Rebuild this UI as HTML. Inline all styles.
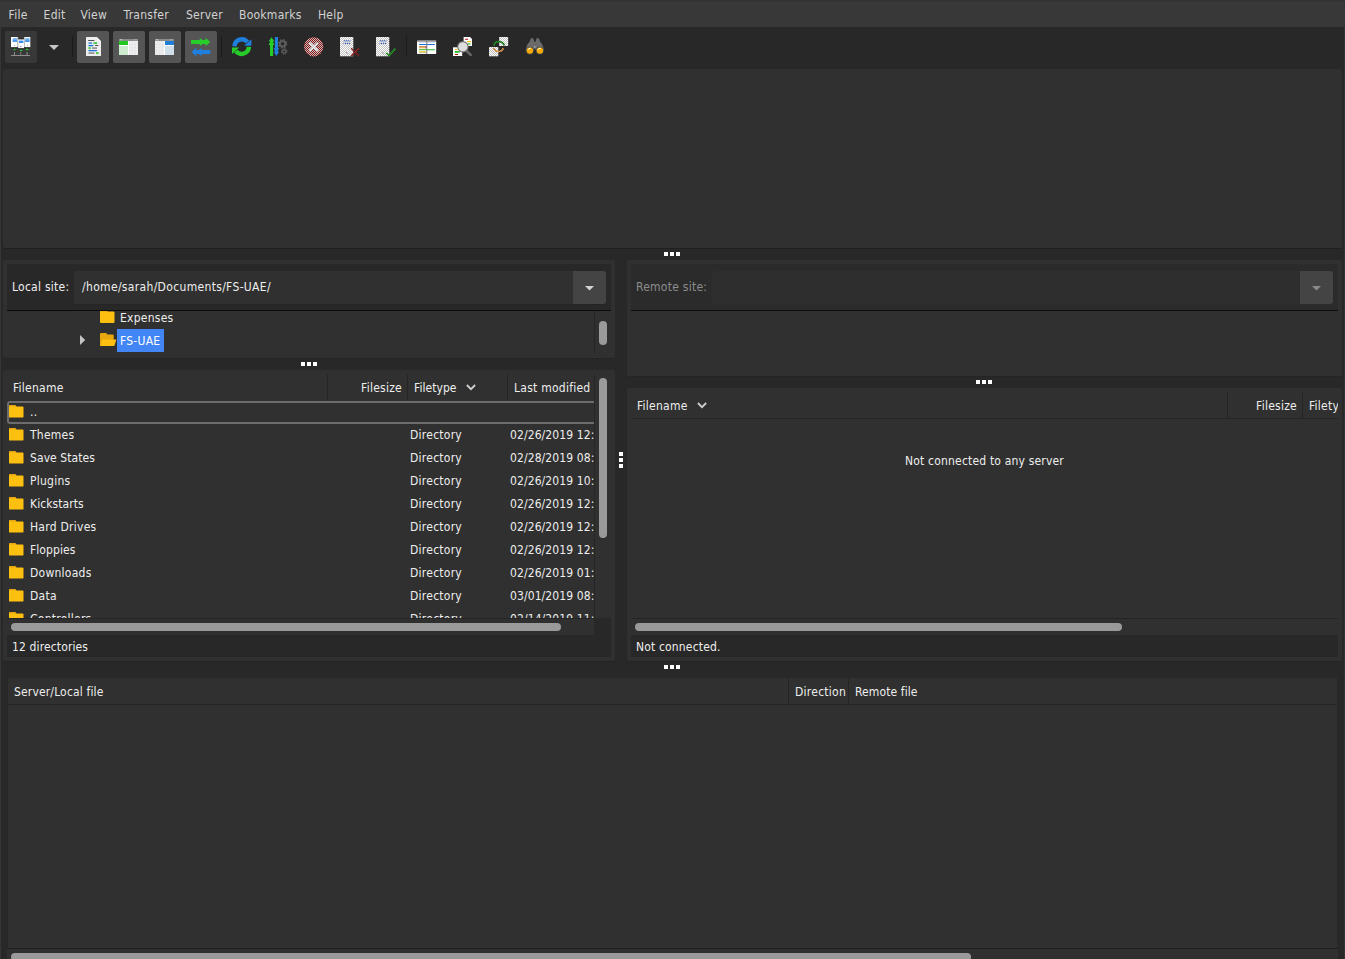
<!DOCTYPE html>
<html><head><meta charset="utf-8"><title>FileZilla</title>
<style>
html,body{margin:0;padding:0;background:#353535;}
body{width:1345px;height:959px;overflow:hidden;position:relative;font-family:"DejaVu Sans Condensed","Liberation Sans",sans-serif;font-size:12px;color:#eeeeee;letter-spacing:0.25px;}
.a{position:absolute;display:block;}
.t{position:absolute;white-space:pre;line-height:15px;height:15px;}
.clip{position:absolute;overflow:hidden;}
</style></head><body>
<svg width="0" height="0" style="position:absolute"><defs>
<pattern id="chk" width="2" height="2" patternUnits="userSpaceOnUse"><rect x="0" y="0" width="1" height="1" fill="#c4c4c4"/><rect x="1" y="1" width="1" height="1" fill="#c4c4c4"/></pattern>
<pattern id="chkd" width="2" height="2" patternUnits="userSpaceOnUse"><rect x="0" y="0" width="1" height="1" fill="#282828"/><rect x="1" y="1" width="1" height="1" fill="#282828"/></pattern>
<pattern id="dts" width="3" height="3" patternUnits="userSpaceOnUse"><rect x="1" y="1" width="1" height="1" fill="#d8cfe6" opacity="0.6"/></pattern>
</defs></svg>
<div class="a" style="left:0px;top:0px;width:1345px;height:27px;background:#383838;"></div>
<div class="a" style="left:0px;top:0px;width:1345px;height:2px;background:#333333;"></div>
<div class="a" style="left:0;top:0;width:1345px;height:1px;background:repeating-linear-gradient(90deg,#303030 0 1px,#343434 1px 2px)"></div>
<div class="t" style="top:8px;left:8.6px;color:#d2d2d2;">File</div>
<div class="t" style="top:8px;left:43.6px;color:#d2d2d2;">Edit</div>
<div class="t" style="top:8px;left:80.5px;color:#d2d2d2;">View</div>
<div class="t" style="top:8px;left:123.6px;color:#d2d2d2;">Transfer</div>
<div class="t" style="top:8px;left:186px;color:#d2d2d2;">Server</div>
<div class="t" style="top:8px;left:239px;color:#d2d2d2;">Bookmarks</div>
<div class="t" style="top:8px;left:318px;color:#d2d2d2;">Help</div>
<div class="a" style="left:1px;top:27px;width:1343px;height:932px;background:#282828;"></div>
<div class="a" style="left:5px;top:31px;width:32px;height:32px;background:#383838;border-radius:2px;"></div>
<div class="a" style="left:77px;top:31px;width:32px;height:32px;background:#555555;border-radius:2px;"></div>
<div class="a" style="left:113px;top:31px;width:32px;height:32px;background:#555555;border-radius:2px;"></div>
<div class="a" style="left:149px;top:31px;width:32px;height:32px;background:#555555;border-radius:2px;"></div>
<div class="a" style="left:185px;top:31px;width:32px;height:32px;background:#555555;border-radius:2px;"></div>
<div class="a" style="left:72px;top:36px;width:1px;height:21px;background:#1b1b1b;"></div>
<div class="a" style="left:221px;top:36px;width:1px;height:21px;background:#1b1b1b;"></div>
<div class="a" style="left:406px;top:36px;width:1px;height:21px;background:#1b1b1b;"></div>
<svg class="a" style="left:49px;top:45px" width="10" height="5" viewBox="0 0 10 5"><path d="M0 0 H10 L5 5 Z" fill="#c6c6c6"/></svg>
<svg class="a" style="left:11px;top:37px" width="20" height="20" viewBox="0 0 20 20">
<rect x="0" y="-0.7" width="6.8" height="1" fill="#151515"/><rect x="13.2" y="-0.7" width="6.2" height="1" fill="#151515"/><rect x="7" y="1.6" width="6" height="1" fill="#151515"/>
<rect x="0" y="0" width="6.7" height="10.4" fill="#ffffff"/><rect x="13.3" y="0" width="6" height="10.4" fill="#ffffff"/>
<rect x="6.7" y="0.2" width="0.6" height="10.2" fill="#b8b8b8"/><rect x="12.9" y="0.2" width="0.5" height="10.2" fill="#b8b8b8"/>
<rect x="0" y="10.4" width="7" height="0.8" fill="#151515"/><rect x="13" y="10.4" width="6.3" height="0.8" fill="#151515"/>
<rect x="7.2" y="2.4" width="5.8" height="9" fill="#ffffff"/><rect x="7" y="11.4" width="6.2" height="0.8" fill="#151515"/>
<rect x="1.7" y="1.2" width="4.3" height="3.6" fill="#6aaef0"/><rect x="1.7" y="3.4" width="4.3" height="1.4" fill="#3b8fe8"/>
<rect x="14.2" y="1.2" width="4.3" height="3.6" fill="#6aaef0"/><rect x="14.2" y="3.4" width="4.3" height="1.4" fill="#3b8fe8"/>
<rect x="8" y="3.6" width="4.4" height="2.4" fill="#3b8fe8"/>
<rect x="3.3" y="8.2" width="0.9" height="0.9" fill="#777"/><rect x="9" y="9.4" width="1.6" height="0.7" fill="#667"/><rect x="16" y="8.2" width="0.9" height="0.9" fill="#8a8"/>
<rect x="2.8" y="11.8" width="1.6" height="1.5" fill="#27cc2b"/><rect x="8.8" y="12.8" width="2.6" height="1.3" fill="#27cc2b"/><rect x="14.8" y="11.8" width="2.5" height="1.4" fill="#27cc2b"/>
<rect x="0.3" y="12.2" width="0.8" height="0.8" fill="#555"/><rect x="5.6" y="12.2" width="0.8" height="0.8" fill="#555"/><rect x="13.2" y="12.2" width="0.8" height="0.8" fill="#555"/><rect x="18" y="12.2" width="0.8" height="0.8" fill="#555"/>
<rect x="3" y="15" width="1" height="3" fill="#8a8a8a"/><rect x="9.2" y="15" width="1" height="3" fill="#7a7a7a"/><rect x="15.4" y="15" width="1.4" height="3" fill="#6f7a6f"/>
<rect x="0" y="18" width="19" height="1" fill="#8e8e8e"/>
</svg>
<svg class="a" style="left:83px;top:37px" width="20" height="20" viewBox="0 0 20 20">
<path d="M3.6 0 H14 L18 4 V18.4 Q18 19 17.4 19 H3.6 Q3 19 3 18.4 V0.6 Q3 0 3.6 0 Z" fill="#eeeeee"/>
<path d="M14 0 L18 4 H14.6 Q14 4 14 3.4 Z" fill="#fafafa"/>
<path d="M14.2 -0.3 L18.3 3.8" stroke="#444" stroke-width="0.7" fill="none"/>
<rect x="5" y="3.1" width="6.5" height="1" rx="0.5" fill="#555"/>
<rect x="5.5" y="5.2" width="3.6" height="1.9" fill="#5a9be0"/><rect x="10.5" y="5.2" width="3.6" height="1.9" fill="#45c845"/>
<rect x="5.3" y="8" width="5.2" height="1.2" rx="0.6" fill="#1a6fd8"/><rect x="12" y="8" width="3.4" height="1.1" rx="0.5" fill="#555"/>
<rect x="5.5" y="10.1" width="2.3" height="2" fill="#45c845"/><rect x="9" y="10.2" width="5" height="1.8" fill="#999"/>
<rect x="5.3" y="13" width="8.8" height="1.2" rx="0.6" fill="#1a6fd8"/>
<rect x="5.5" y="15.2" width="6" height="1.8" fill="#999"/><rect x="13" y="15" width="2.6" height="2.1" fill="#55d055"/>
</svg>
<svg class="a" style="left:119px;top:37px" width="20" height="20" viewBox="0 0 20 20">
<path d="M0 2.6 Q0 2 0.6 2 H18.4 Q19 2 19 2.6 V4 H0 Z" fill="#8c8c8c"/>
<rect x="0.8" y="2.3" width="2.4" height="0.9" fill="#cfcfcf"/><rect x="14.5" y="2.3" width="3.6" height="0.9" fill="#a8a8a8"/>
<path d="M0 4 H19 V17.2 Q19 18 18.2 18 H0.8 Q0 18 0 17.2 Z" fill="#ffffff"/>
<rect x="0" y="4" width="9" height="4" fill="#22c822"/>
<path d="M0 9 H9 V18 H0.8 Q0 18 0 17.2 Z" fill="#cdeecd"/>
<path d="M10 4 H19 V17.2 Q19 18 18.2 18 H10 Z" fill="#ebebeb"/>
<rect x="0" y="9" width="9" height="9" fill="url(#dts)"/><rect x="10" y="5" width="9" height="13" fill="url(#dts)"/>
</svg>
<svg class="a" style="left:155px;top:37px" width="20" height="20" viewBox="0 0 20 20">
<path d="M0 2.6 Q0 2 0.6 2 H18.4 Q19 2 19 2.6 V4 H0 Z" fill="#8c8c8c"/>
<rect x="0.8" y="2.3" width="2.4" height="0.9" fill="#cfcfcf"/><rect x="14.5" y="2.3" width="3.6" height="0.9" fill="#a8a8a8"/>
<path d="M0 4 H19 V17.2 Q19 18 18.2 18 H0.8 Q0 18 0 17.2 Z" fill="#ffffff"/>
<rect x="10" y="4" width="9" height="4" fill="#1f7fd8"/>
<path d="M10 9 H19 V17.2 Q19 18 18.2 18 H10 Z" fill="#cfdfea"/>
<path d="M0 4 H9 V18 H0.8 Q0 18 0 17.2 Z" fill="#ebebeb"/>
<rect x="0" y="5" width="9" height="13" fill="url(#dts)"/><rect x="10" y="9" width="9" height="9" fill="url(#dts)"/>
</svg>
<svg class="a" style="left:191px;top:37px" width="20" height="20" viewBox="0 0 20 20">
<path d="M0 3 H8.8 V1 L11.6 3 H14.6 V0.8 L19.3 5 L14.6 9.2 V7 H11.6 L8.8 9 V7 H0 Z" fill="#27cc2b"/>
<path d="M19.3 13 H10.6 V11 L7.8 13 H5.2 V10.8 L0.5 15 L5.2 19.2 V17 H7.8 L10.6 19 V17 H19.3 Z" fill="#1f7fdc"/>
</svg>
<svg class="a" style="left:232px;top:37px" width="20" height="20" viewBox="0 0 20 20">
<path d="M2.5 9.3 A7.25 7.25 0 0 1 15.5 5.2" fill="none" stroke="#1f7fdc" stroke-width="4.4"/>
<path d="M19.4 2.2 V8.8 H12.2 Z" fill="#1f7fdc"/>
<path d="M16.9 9.9 A7.25 7.25 0 0 1 3.9 14" fill="none" stroke="#27cc2b" stroke-width="4.4"/>
<path d="M0 17 V10.4 H7.2 Z" fill="#27cc2b"/>
</svg>
<svg class="a" style="left:268px;top:37px" width="20" height="20" viewBox="0 0 20 20">
<path d="M3.5 0.2 L6.4 4.4 H5.1 V5.6 L6.4 7.6 V8 H5.1 V19 H2 V8 H0.7 V7.6 L2 5.6 V4.4 H0.7 Z" fill="#27cc2b"/>
<path d="M8.4 19 L5.7 14.8 H6.9 V13.4 L5.7 11.6 V11.2 H6.9 V0 H10 V11.2 H11.1 V11.6 L10 13.4 V14.8 H11.1 Z" fill="#1f7fdc"/>
<circle cx="14.6" cy="6.8" r="2.7" fill="none" stroke="#5c5c5c" stroke-width="2"/>
<circle cx="14.6" cy="6.8" r="4" fill="none" stroke="#5c5c5c" stroke-width="1.6" stroke-dasharray="1.57 1.57"/>
<circle cx="16.2" cy="14.4" r="1.7" fill="none" stroke="#5c5c5c" stroke-width="1.4"/>
<circle cx="16.2" cy="14.4" r="2.7" fill="none" stroke="#5c5c5c" stroke-width="1.2" stroke-dasharray="1.06 1.06"/>
</svg>
<svg class="a" style="left:304px;top:37px" width="20" height="20" viewBox="0 0 20 20">
<circle cx="9.7" cy="9.8" r="9.6" fill="#8e1212"/>
<path d="M6 6.2 L13.4 13.4 M13.4 6.2 L6 13.4" stroke="#f6f6f6" stroke-width="2.2" stroke-linecap="round"/>
<circle cx="9.7" cy="9.8" r="9.6" fill="url(#chk)"/>
</svg>
<svg class="a" style="left:340px;top:37px" width="20" height="20" viewBox="0 0 20 20"><rect x="0" y="0" width="13.2" height="19.2" fill="#ffffff"/>
<rect x="3.5" y="3.2" width="7" height="1.3" fill="#2a55c0"/><rect x="3.5" y="5.8" width="7" height="1.3" fill="#2a55c0"/>
<rect x="6" y="15.5" width="1.5" height="1.2" fill="#555"/>
<rect x="0" y="0" width="13.2" height="19.2" fill="url(#chk)"/>
<path d="M11.2 11.2 L19 19 M19 11.2 L11.2 19" stroke="#a82020" stroke-width="1.5"/>
<path d="M11.2 11.2 L19 19 M19 11.2 L11.2 19" stroke="url(#chkd)" stroke-width="1.5" opacity="0.6"/>
</svg>
<svg class="a" style="left:376px;top:37px" width="20" height="20" viewBox="0 0 20 20"><rect x="0" y="0" width="13.2" height="19.2" fill="#ffffff"/>
<rect x="3.5" y="3.2" width="7" height="1.3" fill="#2a55c0"/><rect x="3.5" y="5.8" width="7" height="1.3" fill="#2a55c0"/>
<rect x="6" y="15.5" width="1.5" height="1.2" fill="#555"/>
<rect x="0" y="0" width="13.2" height="19.2" fill="url(#chk)"/>
<path d="M10.3 16 L13 18.6 L19.3 11.6" stroke="#22a822" stroke-width="1.6" fill="none"/>
<path d="M10.3 16 L13 18.6 L19.3 11.6" stroke="url(#chkd)" stroke-width="1.6" fill="none" opacity="0.5"/>
</svg>
<svg class="a" style="left:417px;top:37px" width="20" height="20" viewBox="0 0 20 20">
<path d="M0 3.6 Q0 3 0.6 3 H18.6 Q19.2 3 19.2 3.6 V4.6 H0 Z" fill="#858585"/>
<path d="M0 4.6 H19.2 V16.2 Q19.2 17 18.4 17 H0.8 Q0 17 0 16.2 Z" fill="#ffffff"/>
<rect x="2" y="5.2" width="16" height="0.8" fill="#c9d8ea"/>
<rect x="2" y="7" width="16" height="1.1" rx="0.5" fill="#1a6fd8"/>
<rect x="2" y="9.3" width="7.4" height="1.1" fill="#b8681c"/><rect x="2" y="10.4" width="7.4" height="0.9" fill="#e8a040"/><rect x="8.6" y="9.3" width="1" height="2" fill="#7030a0"/>
<rect x="2" y="12.3" width="16" height="1" rx="0.5" fill="#22b822"/>
<rect x="2" y="14.3" width="7.4" height="1" fill="#fdbf10"/><rect x="2" y="15.4" width="7.4" height="0.8" fill="#b0b080"/>
<rect x="9.3" y="4" width="1" height="13" fill="#7a7a7a"/>
</svg>
<svg class="a" style="left:453px;top:37px" width="20" height="20" viewBox="0 0 20 20">
<path d="M10.6 0 H17 L19 2 V9 H10.6 Z" fill="#ffffff"/>
<rect x="12" y="1.7" width="3.2" height="1.1" rx="0.5" fill="#b01010"/>
<rect x="14" y="4" width="4.2" height="1.2" rx="0.5" fill="#fdbf10"/>
<rect x="15" y="6.4" width="2.4" height="1.1" fill="#22b822"/>
<path d="M0 10.3 H9.2 V19 H0 Z" fill="#ffffff"/>
<rect x="1.8" y="12" width="2.8" height="1.1" rx="0.5" fill="#fdbf10"/>
<rect x="1.8" y="14" width="4.8" height="1.7" fill="#22b822"/>
<rect x="1.8" y="16.9" width="3.4" height="1.1" rx="0.5" fill="#b01010"/>
<path d="M13.6 13.8 L17.7 17.9" stroke="#686868" stroke-width="2.6" stroke-linecap="round"/>
<circle cx="9.9" cy="9.8" r="5.2" fill="#dedede" stroke="#707070" stroke-width="1.1"/>
</svg>
<svg class="a" style="left:489px;top:37px" width="20" height="20" viewBox="0 0 20 20">
<rect x="10.3" y="0" width="8.8" height="9" fill="#ffffff"/><rect x="10.3" y="0" width="8.8" height="9" fill="url(#chk)"/>
<rect x="0" y="10" width="9.2" height="9.2" fill="#ffffff"/><rect x="0" y="10" width="9.2" height="9.2" fill="url(#chk)"/>
<path d="M4.8 8.8 A5 5 0 0 1 9.6 4.6 A6 6 0 0 1 15.4 8.6" fill="none" stroke="#1f9a1f" stroke-width="1.6"/>
<path d="M4.8 8.8 A5 5 0 0 1 9.6 4.6 A6 6 0 0 1 15.4 8.6" fill="none" stroke="url(#chkd)" stroke-width="1.6" opacity="0.5"/>
<path d="M4.6 11 A5.2 5.2 0 0 0 14.4 11" fill="none" stroke="#d07a1a" stroke-width="1.6"/>
<path d="M4.6 11 A5.2 5.2 0 0 0 14.4 11" fill="none" stroke="url(#chk)" stroke-width="1.6" opacity="0.6"/>
</svg>
<svg class="a" style="left:525px;top:37px" width="20" height="20" viewBox="0 0 20 20">
<path d="M5.6 1.8 Q7 0.4 8.5 1.8 L9.2 4.8 H10.6 L11.3 1.8 Q12.6 0.4 14.1 1.8 L15 4.4 Q17.4 6.4 18.4 10.6 L19 14 H0.6 L1.2 10.6 Q2.2 6.4 4.7 4.4 Z" fill="#6a6a6a"/>
<rect x="9.1" y="9" width="1.6" height="2" fill="#9a9a9a"/>
<path d="M9.9 11 L8.3 15 H11.5 Z" fill="#282828"/>
<circle cx="4.9" cy="13.6" r="3.9" fill="#3e4a4e"/><circle cx="14.9" cy="13.6" r="3.9" fill="#3e4a4e"/>
<circle cx="4.9" cy="13.6" r="3.2" fill="#f8ab00"/><circle cx="14.9" cy="13.6" r="3.2" fill="#f8ab00"/>
<path d="M3 12.6 Q3.6 11.2 5.2 11.2" stroke="#fff" stroke-width="1" fill="none" stroke-linecap="round"/>
<path d="M13 12.6 Q13.6 11.2 15.2 11.2" stroke="#fff" stroke-width="1" fill="none" stroke-linecap="round"/>
</svg>
<div class="a" style="left:3px;top:69px;width:1339px;height:180px;background:#202020;border-radius:2px;"></div>
<div class="a" style="left:3px;top:69px;width:1339px;height:179px;background:#303030;border-radius:2px;"></div>
<div class="a" style="left:664px;top:252px;width:4px;height:4px;background:#ffffff;"></div>
<div class="a" style="left:670px;top:252px;width:4px;height:4px;background:#ffffff;"></div>
<div class="a" style="left:676px;top:252px;width:4px;height:4px;background:#ffffff;"></div>
<div class="a" style="left:3px;top:260px;width:612px;height:98px;background:#303030;border-radius:2px;box-shadow:0 1px 0 #242424;"></div>
<div class="a" style="left:7px;top:264px;width:604px;height:46px;background:#282828;"></div>
<div class="a" style="left:7px;top:310px;width:604px;height:1px;background:#0c0c0c;"></div>
<div class="t" style="top:280px;left:12px;">Local site:</div>
<div class="a" style="left:74px;top:271px;width:532px;height:33px;background:#303030;border-radius:2px;box-shadow:0 1px 0 #242424;"></div>
<div class="a" style="left:573px;top:271px;width:33px;height:33px;background:#444444;border-radius:0 3px 3px 0;"></div>
<svg class="a" style="left:585px;top:286px" width="9" height="5" viewBox="0 0 9 5"><path d="M0 0 H9 L4.5 4.6 Z" fill="#d2d2d2"/></svg>
<div class="t" style="top:280px;left:82px;letter-spacing:0.33px;">/home/sarah/Documents/FS-UAE/</div>
<div class="clip" style="left:7px;top:311px;width:587px;height:43px">
<svg class="a" style="left:93px;top:-1px" width="15" height="13" viewBox="0 0 15 13"><path d="M0 1.2 Q0 0 1.2 0 H6 L7.6 1.5 H13.6 Q14.5 1.5 14.5 2.4 V12.1 Q14.5 13 13.6 13 H0.9 Q0 13 0 12.1 Z" fill="#fdbf10"/><path d="M0 1.2 Q0 0 1.2 0 H6 L7.6 1.5 H0 Z" fill="#e6a70f"/></svg>
</div>
<div class="t" style="top:311px;left:120px;">Expenses</div>
<div class="a" style="left:117px;top:329px;width:47px;height:23px;background:#4285f4;"></div>
<div class="t" style="top:334px;left:120px;color:#ffffff;">FS-UAE</div>
<svg class="a" style="left:100px;top:333px" width="17" height="13" viewBox="0 0 17 13"><path d="M0 1.2 Q0 0 1.2 0 H6 L7.6 1.5 H12.8 Q13.7 1.5 13.7 2.4 V9 H2 L0.6 13 Q0 13 0 12.1 Z" fill="#e6a70f"/><path d="M2.2 6.4 H16.4 L14.6 12.2 Q14.4 13 13.6 13 H0.5 Q0 13 0.2 12.4 Z" fill="#fdbf10"/></svg>
<svg class="a" style="left:80px;top:335px" width="6" height="10" viewBox="0 0 6 10"><path d="M0 0 L5.2 5 L0 10 Z" fill="#c4c4c4"/></svg>
<div class="a" style="left:594px;top:311px;width:1px;height:43px;background:#252525;"></div>
<div class="a" style="left:599px;top:321px;width:8px;height:24px;background:#9a9a9a;border-radius:4px;"></div>
<div class="a" style="left:301px;top:362px;width:4px;height:4px;background:#ffffff;"></div>
<div class="a" style="left:307px;top:362px;width:4px;height:4px;background:#ffffff;"></div>
<div class="a" style="left:313px;top:362px;width:4px;height:4px;background:#ffffff;"></div>
<div class="a" style="left:3px;top:370px;width:612px;height:291px;background:#303030;border-radius:2px;box-shadow:0 1px 0 #242424;"></div>
<div class="a" style="left:327px;top:374px;width:1px;height:26px;background:#252525;"></div>
<div class="a" style="left:407px;top:374px;width:1px;height:26px;background:#252525;"></div>
<div class="a" style="left:507px;top:374px;width:1px;height:26px;background:#252525;"></div>
<div class="t" style="top:381px;left:13px;">Filename</div>
<div class="t" style="top:381px;right:943px;">Filesize</div>
<div class="t" style="top:381px;left:414px;letter-spacing:0.05px;">Filetype</div>
<svg class="a" style="left:466px;top:384px" width="10" height="7" viewBox="0 0 10 7"><path d="M0.9 1 L5 5.2 L9.1 1" fill="none" stroke="#cfcfcf" stroke-width="1.8"/></svg>
<div class="clip" style="left:508px;top:374px;width:86px;height:26px"><div class="t" style="left:6px;top:7px">Last modified</div></div>
<div class="clip" style="left:7px;top:401px;width:587px;height:217px">
<div class="a" style="left:0;top:0;width:640px;height:23px;box-sizing:border-box;border:2px solid #6c6c6c;border-radius:3px"></div>
<svg class="a" style="left:2px;top:4.4px" width="15" height="13" viewBox="0 0 15 13"><path d="M0 1.2 Q0 0 1.2 0 H6 L7.6 1.5 H13.6 Q14.5 1.5 14.5 2.4 V11.7 Q14.5 12.6 13.6 12.6 H0.9 Q0 12.6 0 11.7 Z" fill="#fdbf10"/><path d="M0 1.2 Q0 0 1.2 0 H6 L7.6 1.5 H0 Z" fill="#e6a70f"/></svg>
<div class="t" style="left:23px;top:4px;">..</div>
<svg class="a" style="left:2px;top:27.4px" width="15" height="13" viewBox="0 0 15 13"><path d="M0 1.2 Q0 0 1.2 0 H6 L7.6 1.5 H13.6 Q14.5 1.5 14.5 2.4 V11.7 Q14.5 12.6 13.6 12.6 H0.9 Q0 12.6 0 11.7 Z" fill="#fdbf10"/><path d="M0 1.2 Q0 0 1.2 0 H6 L7.6 1.5 H0 Z" fill="#e6a70f"/></svg>
<div class="t" style="left:23px;top:27px;">Themes</div>
<div class="t" style="left:403px;top:27px">Directory</div>
<div class="t" style="left:503px;top:27px;letter-spacing:0.1px">02/26/2019 12:</div>
<svg class="a" style="left:2px;top:50.4px" width="15" height="13" viewBox="0 0 15 13"><path d="M0 1.2 Q0 0 1.2 0 H6 L7.6 1.5 H13.6 Q14.5 1.5 14.5 2.4 V11.7 Q14.5 12.6 13.6 12.6 H0.9 Q0 12.6 0 11.7 Z" fill="#fdbf10"/><path d="M0 1.2 Q0 0 1.2 0 H6 L7.6 1.5 H0 Z" fill="#e6a70f"/></svg>
<div class="t" style="left:23px;top:50px;letter-spacing:0.08px;">Save States</div>
<div class="t" style="left:403px;top:50px">Directory</div>
<div class="t" style="left:503px;top:50px;letter-spacing:0.1px">02/28/2019 08:</div>
<svg class="a" style="left:2px;top:73.4px" width="15" height="13" viewBox="0 0 15 13"><path d="M0 1.2 Q0 0 1.2 0 H6 L7.6 1.5 H13.6 Q14.5 1.5 14.5 2.4 V11.7 Q14.5 12.6 13.6 12.6 H0.9 Q0 12.6 0 11.7 Z" fill="#fdbf10"/><path d="M0 1.2 Q0 0 1.2 0 H6 L7.6 1.5 H0 Z" fill="#e6a70f"/></svg>
<div class="t" style="left:23px;top:73px;">Plugins</div>
<div class="t" style="left:403px;top:73px">Directory</div>
<div class="t" style="left:503px;top:73px;letter-spacing:0.1px">02/26/2019 10:</div>
<svg class="a" style="left:2px;top:96.4px" width="15" height="13" viewBox="0 0 15 13"><path d="M0 1.2 Q0 0 1.2 0 H6 L7.6 1.5 H13.6 Q14.5 1.5 14.5 2.4 V11.7 Q14.5 12.6 13.6 12.6 H0.9 Q0 12.6 0 11.7 Z" fill="#fdbf10"/><path d="M0 1.2 Q0 0 1.2 0 H6 L7.6 1.5 H0 Z" fill="#e6a70f"/></svg>
<div class="t" style="left:23px;top:96px;letter-spacing:0.07px;">Kickstarts</div>
<div class="t" style="left:403px;top:96px">Directory</div>
<div class="t" style="left:503px;top:96px;letter-spacing:0.1px">02/26/2019 12:</div>
<svg class="a" style="left:2px;top:119.4px" width="15" height="13" viewBox="0 0 15 13"><path d="M0 1.2 Q0 0 1.2 0 H6 L7.6 1.5 H13.6 Q14.5 1.5 14.5 2.4 V11.7 Q14.5 12.6 13.6 12.6 H0.9 Q0 12.6 0 11.7 Z" fill="#fdbf10"/><path d="M0 1.2 Q0 0 1.2 0 H6 L7.6 1.5 H0 Z" fill="#e6a70f"/></svg>
<div class="t" style="left:23px;top:119px;">Hard Drives</div>
<div class="t" style="left:403px;top:119px">Directory</div>
<div class="t" style="left:503px;top:119px;letter-spacing:0.1px">02/26/2019 12:</div>
<svg class="a" style="left:2px;top:142.4px" width="15" height="13" viewBox="0 0 15 13"><path d="M0 1.2 Q0 0 1.2 0 H6 L7.6 1.5 H13.6 Q14.5 1.5 14.5 2.4 V11.7 Q14.5 12.6 13.6 12.6 H0.9 Q0 12.6 0 11.7 Z" fill="#fdbf10"/><path d="M0 1.2 Q0 0 1.2 0 H6 L7.6 1.5 H0 Z" fill="#e6a70f"/></svg>
<div class="t" style="left:23px;top:142px;letter-spacing:0.08px;">Floppies</div>
<div class="t" style="left:403px;top:142px">Directory</div>
<div class="t" style="left:503px;top:142px;letter-spacing:0.1px">02/26/2019 12:</div>
<svg class="a" style="left:2px;top:165.4px" width="15" height="13" viewBox="0 0 15 13"><path d="M0 1.2 Q0 0 1.2 0 H6 L7.6 1.5 H13.6 Q14.5 1.5 14.5 2.4 V11.7 Q14.5 12.6 13.6 12.6 H0.9 Q0 12.6 0 11.7 Z" fill="#fdbf10"/><path d="M0 1.2 Q0 0 1.2 0 H6 L7.6 1.5 H0 Z" fill="#e6a70f"/></svg>
<div class="t" style="left:23px;top:165px;">Downloads</div>
<div class="t" style="left:403px;top:165px">Directory</div>
<div class="t" style="left:503px;top:165px;letter-spacing:0.1px">02/26/2019 01:</div>
<svg class="a" style="left:2px;top:188.4px" width="15" height="13" viewBox="0 0 15 13"><path d="M0 1.2 Q0 0 1.2 0 H6 L7.6 1.5 H13.6 Q14.5 1.5 14.5 2.4 V11.7 Q14.5 12.6 13.6 12.6 H0.9 Q0 12.6 0 11.7 Z" fill="#fdbf10"/><path d="M0 1.2 Q0 0 1.2 0 H6 L7.6 1.5 H0 Z" fill="#e6a70f"/></svg>
<div class="t" style="left:23px;top:188px;">Data</div>
<div class="t" style="left:403px;top:188px">Directory</div>
<div class="t" style="left:503px;top:188px;letter-spacing:0.1px">03/01/2019 08:</div>
<svg class="a" style="left:2px;top:211.4px" width="15" height="13" viewBox="0 0 15 13"><path d="M0 1.2 Q0 0 1.2 0 H6 L7.6 1.5 H13.6 Q14.5 1.5 14.5 2.4 V11.7 Q14.5 12.6 13.6 12.6 H0.9 Q0 12.6 0 11.7 Z" fill="#fdbf10"/><path d="M0 1.2 Q0 0 1.2 0 H6 L7.6 1.5 H0 Z" fill="#e6a70f"/></svg>
<div class="t" style="left:23px;top:211px;">Controllers</div>
<div class="t" style="left:403px;top:211px">Directory</div>
<div class="t" style="left:503px;top:211px;letter-spacing:0.1px">02/14/2019 11:</div>
</div>
<div class="a" style="left:594px;top:374px;width:1px;height:244px;background:#252525;"></div>
<div class="a" style="left:7px;top:618px;width:587px;height:1px;background:#252525;"></div>
<div class="a" style="left:594px;top:618px;width:17px;height:17px;background:#282828;"></div>
<div class="a" style="left:599px;top:378px;width:8px;height:160px;background:#9a9a9a;border-radius:4px;"></div>
<div class="a" style="left:11px;top:623px;width:550px;height:8px;background:#9a9a9a;border-radius:4px;"></div>
<div class="a" style="left:7px;top:635px;width:604px;height:22px;background:#282828;"></div>
<div class="t" style="top:640px;left:12px;letter-spacing:0.13px;">12 directories</div>
<div class="a" style="left:619px;top:452px;width:4px;height:4px;background:#ffffff;"></div>
<div class="a" style="left:619px;top:458px;width:4px;height:4px;background:#ffffff;"></div>
<div class="a" style="left:619px;top:464px;width:4px;height:4px;background:#ffffff;"></div>
<div class="a" style="left:627px;top:260px;width:715px;height:116px;background:#303030;border-radius:2px;box-shadow:0 1px 0 #242424;"></div>
<div class="a" style="left:631px;top:264px;width:707px;height:46px;background:#2b2b2b;"></div>
<div class="a" style="left:631px;top:310px;width:707px;height:1px;background:#0c0c0c;"></div>
<div class="t" style="top:280px;left:636px;color:#8c8c8c;">Remote site:</div>
<div class="a" style="left:712px;top:271px;width:621px;height:33px;background:#2e2e2e;border-radius:3px;"></div>
<div class="a" style="left:1300px;top:271px;width:33px;height:33px;background:#444444;border-radius:0 3px 3px 0;"></div>
<svg class="a" style="left:1312px;top:286px" width="9" height="5" viewBox="0 0 9 5"><path d="M0 0 H9 L4.5 4.6 Z" fill="#8a8a8a"/></svg>
<div class="a" style="left:976px;top:380px;width:4px;height:4px;background:#ffffff;"></div>
<div class="a" style="left:982px;top:380px;width:4px;height:4px;background:#ffffff;"></div>
<div class="a" style="left:988px;top:380px;width:4px;height:4px;background:#ffffff;"></div>
<div class="a" style="left:627px;top:388px;width:715px;height:273px;background:#303030;border-radius:2px;box-shadow:0 1px 0 #242424;"></div>
<div class="a" style="left:1227px;top:392px;width:1px;height:26px;background:#252525;"></div>
<div class="a" style="left:1302px;top:392px;width:1px;height:26px;background:#252525;"></div>
<div class="a" style="left:631px;top:418px;width:707px;height:1px;background:#252525;"></div>
<div class="t" style="top:399px;left:637px;">Filename</div>
<svg class="a" style="left:697px;top:402px" width="10" height="7" viewBox="0 0 10 7"><path d="M0.9 1 L5 5.2 L9.1 1" fill="none" stroke="#cfcfcf" stroke-width="1.8"/></svg>
<div class="t" style="top:399px;right:48px;">Filesize</div>
<div class="clip" style="left:1303px;top:392px;width:35px;height:26px"><div class="t" style="left:6px;top:7px">Filetype</div></div>
<div class="t" style="left:631px;width:707px;text-align:center;top:454px;letter-spacing:0.18px">Not connected to any server</div>
<div class="a" style="left:631px;top:618px;width:707px;height:1px;background:#252525;"></div>
<div class="a" style="left:635px;top:623px;width:487px;height:8px;background:#9a9a9a;border-radius:4px;"></div>
<div class="a" style="left:631px;top:635px;width:707px;height:22px;background:#282828;"></div>
<div class="t" style="top:640px;left:636px;letter-spacing:0.16px;">Not connected.</div>
<div class="a" style="left:664px;top:665px;width:4px;height:4px;background:#ffffff;"></div>
<div class="a" style="left:670px;top:665px;width:4px;height:4px;background:#ffffff;"></div>
<div class="a" style="left:676px;top:665px;width:4px;height:4px;background:#ffffff;"></div>
<div class="a" style="left:8px;top:678px;width:1329px;height:270px;background:#303030;"></div>
<div class="a" style="left:788px;top:678px;width:1px;height:26px;background:#252525;"></div>
<div class="a" style="left:848px;top:678px;width:1px;height:26px;background:#252525;"></div>
<div class="a" style="left:8px;top:704px;width:1329px;height:1px;background:#252525;"></div>
<div class="t" style="top:685px;left:14px;letter-spacing:0.16px;">Server/Local file</div>
<div class="t" style="top:685px;left:795px;">Direction</div>
<div class="t" style="top:685px;left:855px;letter-spacing:0.1px;">Remote file</div>
<div class="a" style="left:7px;top:948px;width:1331px;height:1px;background:#1e1e1e;"></div>
<div class="a" style="left:7px;top:949px;width:1331px;height:10px;background:#303030;"></div>
<div class="a" style="left:11px;top:953px;width:960px;height:8px;background:#9a9a9a;border-radius:4px;"></div>
</body></html>
